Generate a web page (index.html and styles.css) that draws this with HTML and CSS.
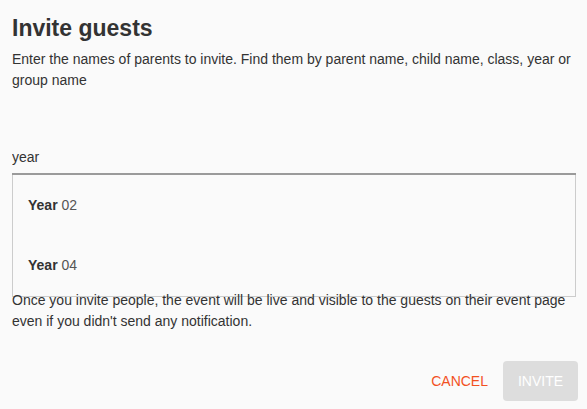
FILE: index.html
```html
<!doctype html>
<html lang="en">
<head>
    <meta charset="UTF-8">
    <meta name="viewport" content="width=device-width, initial-scale=1.0">
    <title>Invite guests</title>
    <link rel="stylesheet" href="styles.css">
</head>
<body>
    <div class="dialog">
        <h2 class="title">Invite guests</h2>
        <p class="hint">Enter the names of parents to invite. Find them by parent name, child name, class, year or group name</p>

        <div class="search">
            <input class="search-input" type="text" value="year">
            <ul class="suggestions">
                <li><b>Year</b> 02</li>
                <li><b>Year</b> 04</li>
            </ul>
        </div>

        <p class="note">Once you invite people, the event will be live and visible to the guests on their event page even if you didn't send any notification.</p>

        <div class="actions">
            <button class="btn-cancel">CANCEL</button>
            <button class="btn-invite" disabled>INVITE</button>
        </div>
    </div>
</body>
</html>
```

FILE: styles.css
```css
html, body {
    margin: 0;
    padding: 0;
    background-color: #fafafa;
}

body {
    font-family: "Liberation Sans", Arial, sans-serif;
    color: #333333;
}

.dialog {
    padding: 13px 9px 0 12px;
}

.title {
    margin: 0;
    font-size: 23px;
    line-height: 30px;
    font-weight: bold;
    color: #333333;
}

.hint {
    margin: 6px 0 0;
    font-size: 14px;
    line-height: 21px;
}

.search {
    margin-top: 58px;
}

.search-input {
    display: block;
    width: calc(100% - 2px);
    box-sizing: border-box;
    padding: 0 0 8px;
    border: none;
    border-bottom: 2px solid #9a9a9a;
    background: transparent;
    font-family: inherit;
    font-size: 14px;
    color: #333333;
    outline: none;
}

.suggestions {
    list-style: none;
    margin: 0;
    padding: 0;
    width: calc(100% - 2px);
    box-sizing: border-box;
    border: 1px solid #cccccc;
    border-top: none;
    height: 122px;
}

.suggestions li {
    height: 60px;
    line-height: 60px;
    padding-left: 15px;
    font-size: 14px;
    color: #555555;
}

.suggestions b {
    color: #333333;
}

.note {
    margin: -7px 0 0;
    font-size: 14px;
    line-height: 21px;
}

.actions {
    display: flex;
    justify-content: flex-end;
    align-items: center;
    gap: 15px;
    margin-top: 29px;
}

.btn-cancel {
    background: none;
    border: none;
    padding: 0;
    font-family: inherit;
    font-size: 14px;
    color: #f2511f;
    cursor: pointer;
}

.btn-invite {
    width: 75px;
    height: 40px;
    border: none;
    border-radius: 4px;
    background-color: #dddddd;
    color: #ffffff;
    font-family: inherit;
    font-size: 14px;
}
```
